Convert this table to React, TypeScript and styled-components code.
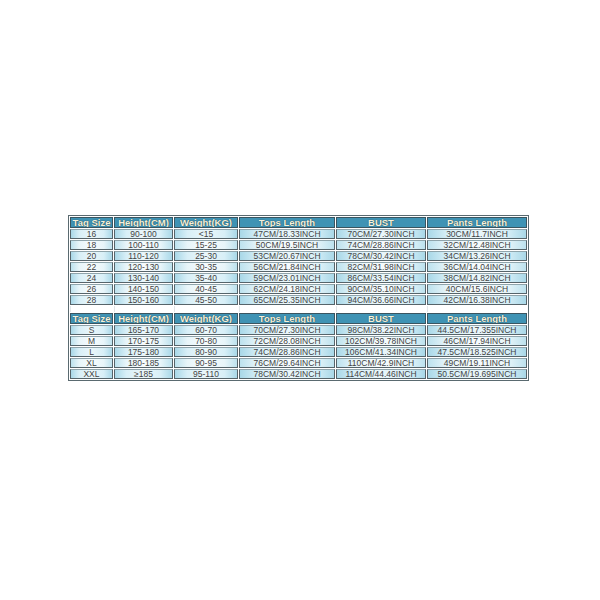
import React from "react";
import styled, { createGlobalStyle } from "styled-components";

const Global = createGlobalStyle`
  html, body { margin: 0; padding: 0; background: #fff; }
  body { font-family: "Liberation Sans", Arial, sans-serif; }
`;

const Page = styled.div`
  width: 600px;
  height: 600px;
  box-sizing: border-box;
  padding: 215px 0 0 68px;
  background: #fff;
`;

const Table = styled.table`
  border-collapse: separate;
  border-spacing: 1px;
  border: 1px solid #5a6a70;
  background: #fff;
  table-layout: fixed;
  width: 461px;
`;

const Col = styled.col<{ $w: number }>`
  width: ${(p) => p.$w}px;
`;

const HeadCell = styled.td`
  height: 9px;
  padding: 0;
  background: #3f93b4;
  border: 1px solid #3a5560;
  color: #f4f1dc;
  font-size: 9.5px;
  font-weight: bold;
  line-height: 9px;
  text-align: center;
  white-space: nowrap;
  overflow: hidden;
  text-shadow: 0 0 1px #1a2a30;
`;

const Cell = styled.td<{ $alt: boolean }>`
  height: 8px;
  padding: 0;
  background: ${(p) =>
    p.$alt
      ? "linear-gradient(90deg,#a9d8e8 0%,#d8eff7 20%,#eaf6fa 50%,#d8eff7 80%,#a9d8e8 100%)"
      : "linear-gradient(90deg,#bde2ee 0%,#e8f5f9 20%,#f6fbfd 50%,#e8f5f9 80%,#bde2ee 100%)"};
  border: 1px solid #56646a;
  border-top-color: #8fa4ab;
  color: #444;
  font-size: 8.5px;
  line-height: 8px;
  text-align: center;
  white-space: nowrap;
  overflow: hidden;
`;

const BlankCell = styled.td`
  height: 6px;
  padding: 0;
  background: #fff;
  border-left: 1px solid #e2e6e8;
`;

const header = ["Tag Size", "Height(CM)", "Weight(KG)", "Tops Length", "BUST", "Pants Length"];

const kids: string[][] = [
  ["16", "90-100", "<15", "47CM/18.33INCH", "70CM/27.30INCH", "30CM/11.7INCH"],
  ["18", "100-110", "15-25", "50CM/19.5INCH", "74CM/28.86INCH", "32CM/12.48INCH"],
  ["20", "110-120", "25-30", "53CM/20.67INCH", "78CM/30.42INCH", "34CM/13.26INCH"],
  ["22", "120-130", "30-35", "56CM/21.84INCH", "82CM/31.98INCH", "36CM/14.04INCH"],
  ["24", "130-140", "35-40", "59CM/23.01INCH", "86CM/33.54INCH", "38CM/14.82INCH"],
  ["26", "140-150", "40-45", "62CM/24.18INCH", "90CM/35.10INCH", "40CM/15.6INCH"],
  ["28", "150-160", "45-50", "65CM/25.35INCH", "94CM/36.66INCH", "42CM/16.38INCH"],
];

const adults: string[][] = [
  ["S", "165-170", "60-70", "70CM/27.30INCH", "98CM/38.22INCH", "44.5CM/17.355INCH"],
  ["M", "170-175", "70-80", "72CM/28.08INCH", "102CM/39.78INCH", "46CM/17.94INCH"],
  ["L", "175-180", "80-90", "74CM/28.86INCH", "106CM/41.34INCH", "47.5CM/18.525INCH"],
  ["XL", "180-185", "90-95", "76CM/29.64INCH", "110CM/42.9INCH", "49CM/19.11INCH"],
  ["XXL", "\u2265185", "95-110", "78CM/30.42INCH", "114CM/44.46INCH", "50.5CM/19.695INCH"],
];

const widths = [43, 59, 64, 96, 90, 100];

const HeaderRow = () => (
  <tr>
    {header.map((h) => (
      <HeadCell key={h}>{h}</HeadCell>
    ))}
  </tr>
);

const DataRows = ({ rows }: { rows: string[][] }) => (
  <>
    {rows.map((r, i) => (
      <tr key={r[0]}>
        {r.map((c, j) => (
          <Cell key={j} $alt={i % 2 === 0}>
            {c}
          </Cell>
        ))}
      </tr>
    ))}
  </>
);

export default function App() {
  return (
    <>
      <Global />
      <Page>
        <Table>
          <colgroup>
            {widths.map((w, i) => (
              <Col key={i} $w={w} />
            ))}
          </colgroup>
          <tbody>
            <HeaderRow />
            <DataRows rows={kids} />
            <tr>
              {widths.map((_, i) => (
                <BlankCell key={i} />
              ))}
            </tr>
            <HeaderRow />
            <DataRows rows={adults} />
          </tbody>
        </Table>
      </Page>
    </>
  );
}
